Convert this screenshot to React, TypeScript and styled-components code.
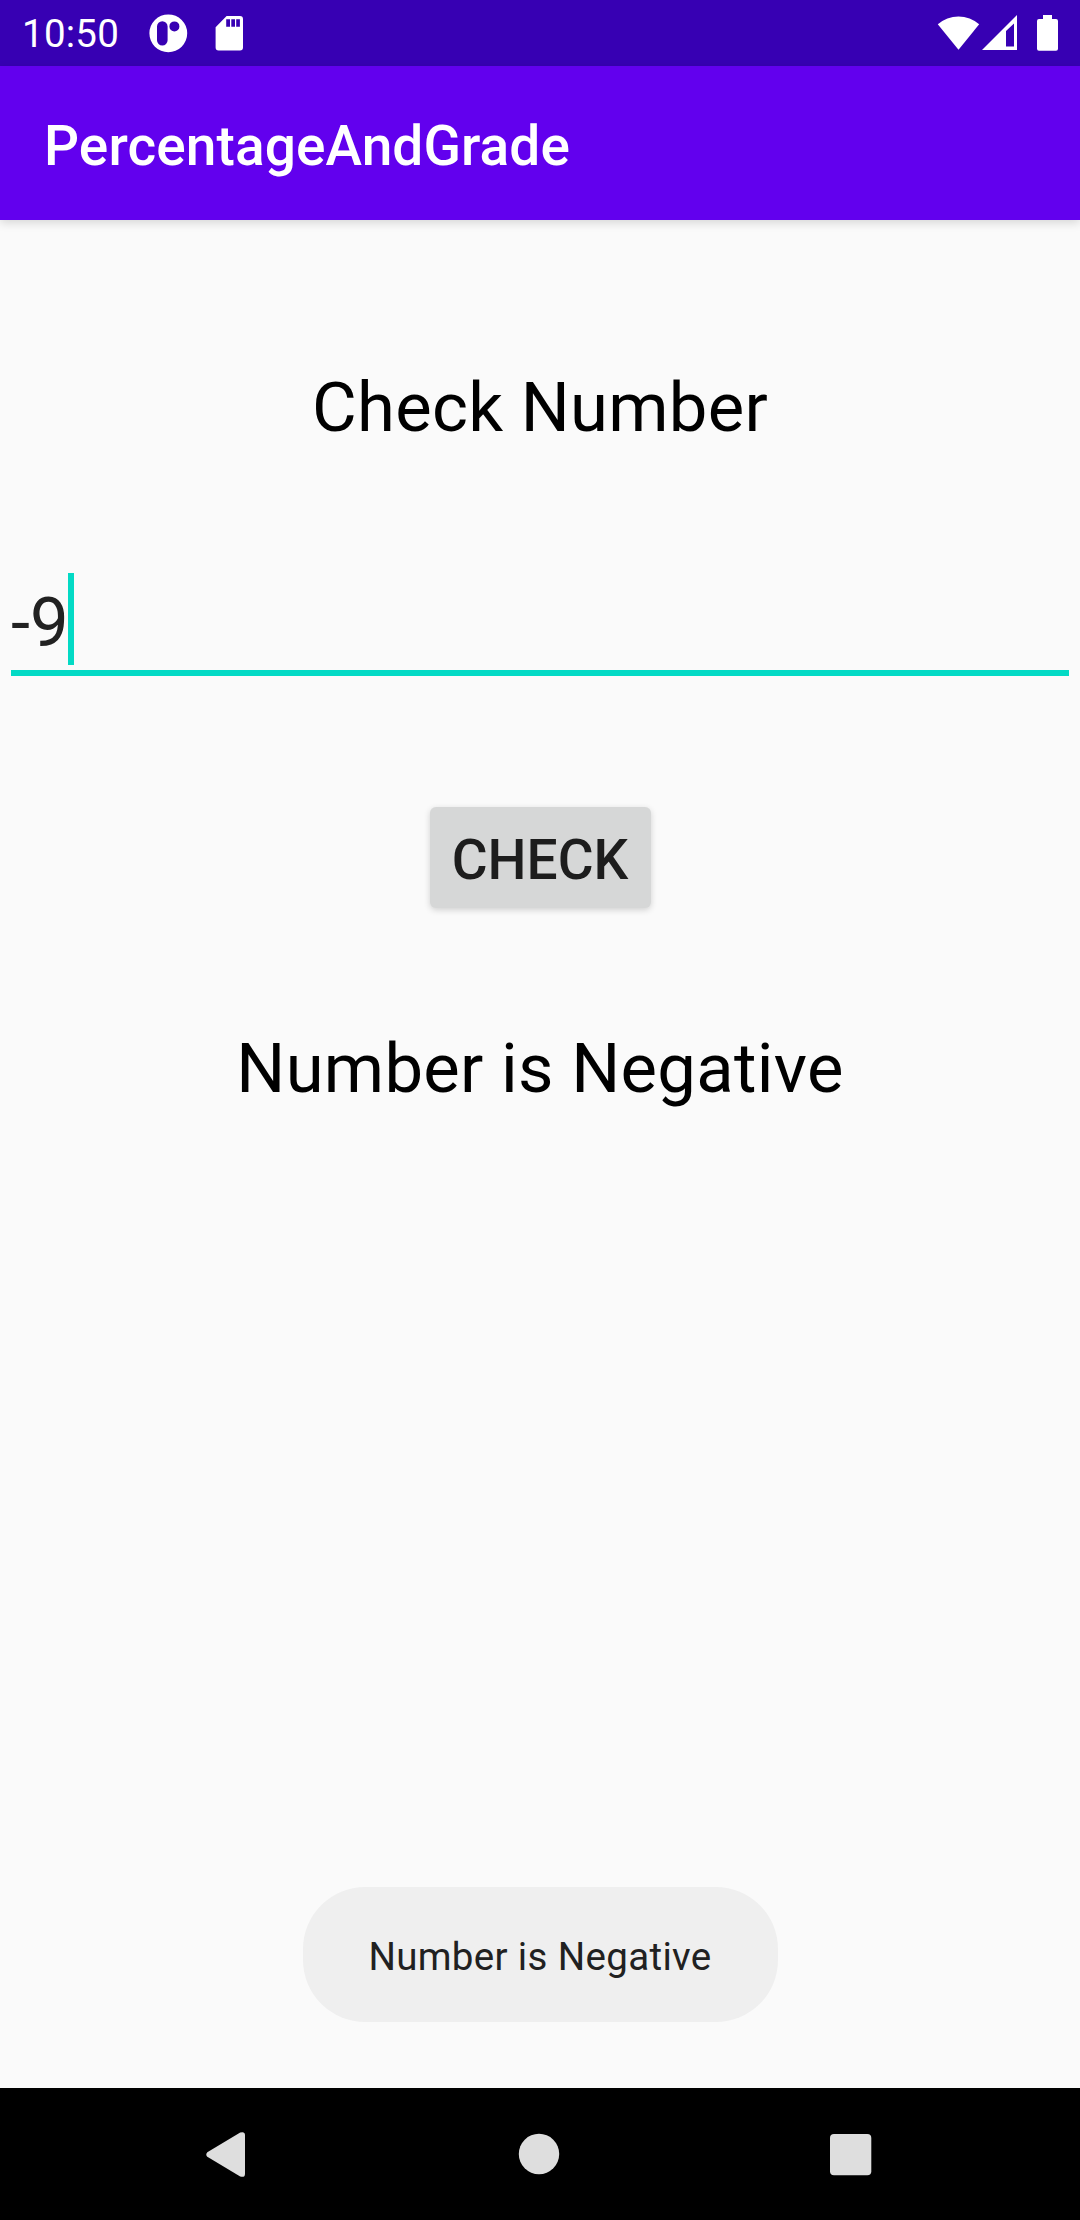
import React from 'react';
import styled, { createGlobalStyle } from 'styled-components';

const GlobalStyle = createGlobalStyle`
  *, *::before, *::after { box-sizing: border-box; }
  body { margin: 0; background: #fafafa; }
`;

const Screen = styled.div`
  display: flex;
  flex-direction: column;
  width: 1080px;
  height: 2220px;
  overflow: hidden;
  background: #fafafa;
  color: #000;
  font-family: Roboto, 'Noto Sans', sans-serif;
`;

const StatusBar = styled.header`
  display: flex;
  justify-content: space-between;
  flex: none;
  height: 66px;
  padding: 0 21px 0 22px;
  background: #3700b3;
  color: #fff;
`;

const StatusGroup = styled.div`
  display: flex;
`;

const Clock = styled.span`
  width: 127px;
  padding-top: 1px;
  font-size: 38.5px;
  letter-spacing: 0.25px;
  line-height: 66px;
`;

const StatusIcon = styled.svg<{ $gap?: number }>`
  display: block;
  flex: none;
  height: 66px;
  margin-left: ${({ $gap = 0 }) => $gap}px;
  fill: #fff;
`;

const AppBar = styled.div`
  display: flex;
  flex: none;
  align-items: center;
  height: 154px;
  padding: 5px 44px 0;
  background: #6200ee;
  box-shadow: 0 3px 9px rgba(0, 0, 0, 0.14);
`;

const Title = styled.h1`
  margin: 0;
  color: #fff;
  font-size: 55px;
  font-weight: 500;
  letter-spacing: 0.1px;
  line-height: 64px;
`;

const Content = styled.main`
  display: flex;
  flex: 1;
  flex-direction: column;
  align-items: center;
  padding: 142px 11px 66px;
`;

const Label = styled.p`
  margin: 0;
  font-size: 68.75px;
  letter-spacing: 0.3px;
  line-height: 92px;
  white-space: nowrap;
`;

const Field = styled.div`
  display: flex;
  align-self: stretch;
  height: 103px;
  margin-top: 119px;
  border-bottom: 6px solid #03dac5;
  color: #212121;
  font-size: 68.75px;
  line-height: 99px;
`;

const FieldValue = styled.span`
  width: 57px;
  white-space: nowrap;
`;

const Caret = styled.span`
  width: 6px;
  height: 92px;
  background: #03dac5;
`;

const CheckButton = styled.button`
  width: 221px;
  height: 101px;
  margin: 131px 0 115px;
  padding: 4px 0 0;
  border: 0;
  border-radius: 6px;
  background: #d6d7d7;
  box-shadow: 0 2px 6px rgba(0, 0, 0, 0.17);
  color: #1d1d1d;
  font-family: inherit;
  font-size: 55px;
  font-weight: 500;
  line-height: 64px;
`;

const Toast = styled.div`
  display: flex;
  align-items: center;
  justify-content: center;
  width: 475px;
  height: 135px;
  margin-top: auto;
  padding-top: 4px;
  border-radius: 62px;
  background: #efefef;
  color: #212121;
  font-size: 38.5px;
  letter-spacing: 0.34px;
  line-height: 46px;
  white-space: nowrap;
`;

const NavBar = styled.nav`
  display: flex;
  flex: none;
  align-items: center;
  justify-content: space-between;
  height: 132px;
  padding: 0 199px 0 196px;
  background: #000;
`;

const NavIcon = styled.svg`
  display: block;
  width: 60px;
  height: 60px;
  fill: #dedede;
`;

export default function App() {
  return (
    <>
      <GlobalStyle />
      <Screen>
        <StatusBar>
          <StatusGroup>
            <Clock>10:50</Clock>
            <StatusIcon width="39" viewBox="149 0 39 66">
              <path
                fillRule="evenodd"
                d="M168.3 14.4a18.9 18.9 0 1 1 0 37.8a18.9 18.9 0 1 1 0-37.8Z
                  M162.3 21.2a5.3 5.3 0 0 0-5.3 5.3v13.8a5.3 5.3 0 0 0 10.6 0V26.5a5.3 5.3 0 0 0-5.3-5.3Z
                  M174.4 21.4a5 5 0 1 0 0 10a5 5 0 1 0 0-10Z"
              />
            </StatusIcon>
            <StatusIcon $gap={27} width="29" viewBox="215 0 29 66">
              <path
                fillRule="evenodd"
                d="M226.6 16H240a3 3 0 0 1 3 3v28.4a3 3 0 0 1-3 3h-21.4a3 3 0 0 1-3-3V27.2Z
                  M226.2 19.3v7.4h3.8v-7.4Z M231.3 19.3v7.4h3.7v-7.4Z M236.2 19.3v7.4h3.7v-7.4Z"
              />
            </StatusIcon>
          </StatusGroup>
          <StatusGroup>
            <StatusIcon width="43" viewBox="937 0 43 66">
              <path d="M937.8 24.3A31 31 0 0 1 979.2 24.3L958.5 49.7Z" />
            </StatusIcon>
            <StatusIcon $gap={2} width="36" viewBox="982 0 36 66">
              <path fillRule="evenodd" d="M982 50L1017 15V50Z M1006 31V46.4H1014V23.4Z" />
            </StatusIcon>
            <StatusIcon $gap={19} width="22" viewBox="1037 0 22 66">
              <path d="M1043 15h9v4h4a2 2 0 0 1 2 2v27.7a2 2 0 0 1-2 2h-17a2 2 0 0 1-2-2V21a2 2 0 0 1 2-2h4Z" />
            </StatusIcon>
          </StatusGroup>
        </StatusBar>
        <AppBar>
          <Title>PercentageAndGrade</Title>
        </AppBar>
        <Content>
          <Label>Check Number</Label>
          <Field>
            <FieldValue>-9</FieldValue>
            <Caret />
          </Field>
          <CheckButton type="button">CHECK</CheckButton>
          <Label>Number is Negative</Label>
          <Toast role="status">Number is Negative</Toast>
        </Content>
        <NavBar>
          <NavIcon viewBox="196 2124 60 60">
            <path d="M207.3 2152.2L240.2 2132.6Q244.8 2131 245 2135V2174Q244.8 2178 240.2 2176.4L207.3 2156.8Q205.2 2154.5 207.3 2152.2Z" />
          </NavIcon>
          <NavIcon viewBox="510 2124 60 60">
            <circle cx="540" cy="2154" r="20.2" />
          </NavIcon>
          <NavIcon viewBox="821 2124 60 60">
            <rect x="830" y="2134" width="41.3" height="41.3" rx="4" />
          </NavIcon>
        </NavBar>
      </Screen>
    </>
  );
}
